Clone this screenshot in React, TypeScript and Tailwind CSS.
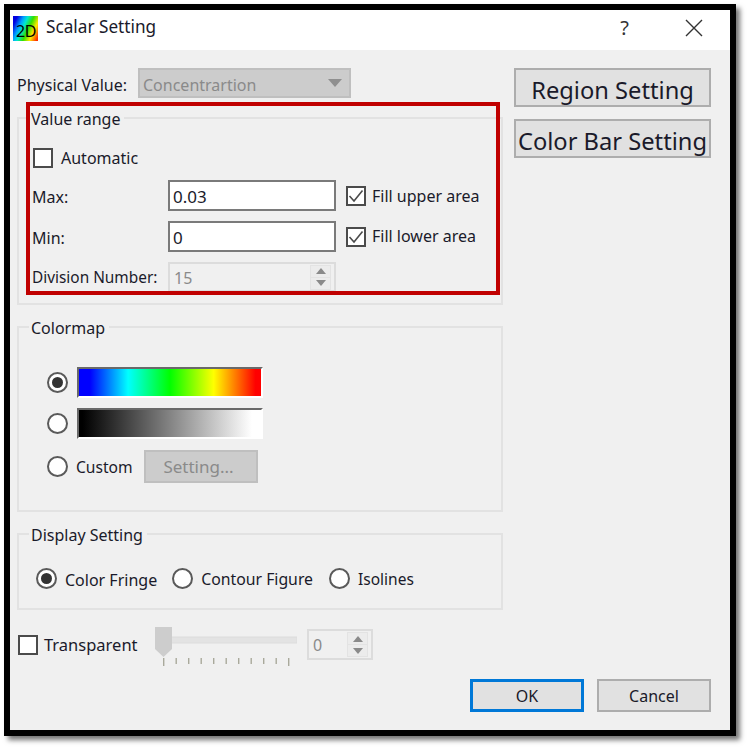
const FONT = "font-['Noto_Sans','Open_Sans',sans-serif]";

function Check({ checked = false }: { checked?: boolean }) {
  return (
    <div className="w-[20px] h-[20px] shrink-0 bg-white border-2 border-[#4b4b4b] flex items-center justify-center">
      {checked && (
        <svg width="16" height="16" viewBox="0 0 16 16" fill="none">
          <path d="M1.5 8 L6 13 L14.5 2.5" stroke="#4b4b4b" strokeWidth="1.6" />
        </svg>
      )}
    </div>
  );
}

function Radio({ on = false }: { on?: boolean }) {
  return (
    <div className="w-[21px] h-[21px] shrink-0 rounded-full bg-white border-2 border-[#5a5a5a] flex items-center justify-center">
      {on && <div className="w-[11px] h-[11px] rounded-full bg-[#333333]" />}
    </div>
  );
}

function SpinArrows() {
  return (
    <div className="w-[21px] flex flex-col gap-[1px] bg-[#e3e3e3] px-[1px] py-[1px]">
      <div className="h-[11px] bg-[#ececec] flex items-center justify-center">
        <svg width="10" height="6" viewBox="0 0 10 6"><path d="M5 0 L10 6 L0 6 Z" fill="#8a8a8a" /></svg>
      </div>
      <div className="h-[11px] bg-[#ececec] flex items-center justify-center">
        <svg width="10" height="6" viewBox="0 0 10 6"><path d="M0 0 L10 0 L5 6 Z" fill="#8a8a8a" /></svg>
      </div>
    </div>
  );
}

function Group({ title, className, children }: { title: string; className: string; children: React.ReactNode }) {
  return (
    <div className={`relative border-2 border-[#e2e2e2] ${className}`}>
      <span className="absolute left-[10px] top-[-11px] bg-[#f0f0f0] pl-[2px] pr-[4px] leading-[22px] text-[16px] text-[#1a1a2a]">
        {title}
      </span>
      {children}
    </div>
  );
}

function Slider() {
  const ticks = [163, 175.5, 188, 200.5, 213, 225.5, 238, 250.5, 263, 275.5, 288];
  return (
    <svg width="142" height="42" viewBox="155 623 142 42" className="ml-[17px] mt-[5px]">
      <rect x="170" y="634" width="127" height="6" fill="#e3e3e3" stroke="#dcdcdc" />
      <path d="M155 624 H172 V646 L163.5 654 L155 646 Z" fill="#cdcdcd" />
      {ticks.map((x, i) => (
        <rect key={x} x={x} y="655" width="1.4" height={i === 0 || i === 10 ? 8 : 6} fill="#a9a99b" />
      ))}
    </svg>
  );
}

export default function App() {
  return (
    <div className={`${FONT} w-[749px] h-[749px] bg-white p-[4px] text-[16px] text-[#1a1a2a]`}>
      <div className="w-[732px] h-[732px] border-[6px] border-black bg-[#f0f0f0] shadow-[4px_4px_5px_rgba(0,0,0,0.55)] flex flex-col">
        {/* title bar */}
        <div className="h-[40px] bg-white flex items-center pl-[3px] pr-[27px]">
          <div className="w-[25px] h-[25px] mb-[3px] pt-[5px] pl-[3px] bg-[linear-gradient(115deg,#0000e0_12%,#00a0ff_30%,#00e8d0_42%,#30e000_58%,#ffe800_76%,#ff3000_95%)]">
            <div className="text-[16px] leading-[20px] tracking-[-0.5px] text-black">2D</div>
          </div>
          <span className="ml-[8px] mb-[6px] text-[17.2px] text-[#1a1a2a]">Scalar Setting</span>
          <span className="ml-auto mb-[5px] text-[20px] text-[#333333] translate-x-[3px]">?</span>
          <svg width="18" height="18" viewBox="0 0 18 18" className="ml-[59px] mb-[5px]">
            <path d="M1 1 L17 17 M17 1 L1 17" stroke="#333333" strokeWidth="1.4" />
          </svg>
        </div>

        <div className="flex pl-[7px] pt-[18px]">
          {/* left column */}
          <div className="w-[486px] flex flex-col">
            <div className="flex items-center h-[30px]">
              <span className="w-[121px] pt-[3px]">Physical Value:</span>
              <div className="w-[213px] h-[30px] bg-[#cccccc] border-2 border-[#bfbfbf] flex items-center pl-[3px] pr-[7px] text-[#8a8a8a]">
                <span className="pt-[3px]">Concentrartion</span>
                <svg width="14" height="8" viewBox="0 0 14 8" className="ml-auto">
                  <path d="M0 0 H14 L7 8 Z" fill="#8f8f8f" />
                </svg>
              </div>
            </div>

            <Group title="Value range" className="mt-[19px] h-[188px] pl-[13px] pt-[29px]">
              <div className="flex items-center gap-[8px] h-[20px] ml-[1px]">
                <Check />
                <span>Automatic</span>
              </div>
              <div className="flex items-center h-[31px] mt-[12px]">
                <span className="w-[136px] pt-[2px]">Max:</span>
                <div className="w-[168px] h-[31px] bg-white border-2 border-[#7a7a7a] flex items-center pl-[3px] pt-[2px] text-[17px]">0.03</div>
                <div className="ml-[10px]"><Check checked /></div>
                <span className="ml-[6px]">Fill upper area</span>
              </div>
              <div className="flex items-center h-[31px] mt-[10px]">
                <span className="w-[136px] pt-[2px]">Min:</span>
                <div className="w-[168px] h-[31px] bg-white border-2 border-[#7a7a7a] flex items-center pl-[3px] pt-[2px] text-[17px]">0</div>
                <div className="ml-[10px]"><Check checked /></div>
                <span className="ml-[6px] pb-[2px]">Fill lower area</span>
              </div>
              <div className="flex items-center h-[30px] mt-[10px]">
                <span className="w-[136px] pt-[2px] text-[15.4px]">Division Number:</span>
                <div className="w-[168px] h-[30px] border-2 border-[#dcdcdc] flex items-center justify-between pl-[4px] pr-[3px] text-[#8a8a8a]">
                  <span className="pt-[1px]">15</span>
                  <SpinArrows />
                </div>
              </div>
            </Group>

            <Group title="Colormap" className="mt-[21px] h-[186px] pl-[28px] pt-[39px]">
              <div className="flex items-center gap-[9px] h-[31px]">
                <Radio on />
                <div className="w-[186px] h-[31px] border-2 border-t-[#696969] border-l-[#696969] border-r-white border-b-white bg-[linear-gradient(90deg,#0000ff_3%,#0000ff_6%,#00ffff_27%,#00ff00_50%,#ffff00_74%,#ff0000_97%)]" />
              </div>
              <div className="flex items-center gap-[9px] h-[31px] mt-[10px]">
                <Radio />
                <div className="w-[186px] h-[31px] border-2 border-t-[#696969] border-l-[#696969] border-r-white border-b-white bg-[linear-gradient(90deg,#000000_2%,#ffffff_95%)]" />
              </div>
              <div className="flex items-center h-[33px] mt-[11px]">
                <Radio />
                <span className="ml-[8px] w-[56px] pt-[2px] whitespace-nowrap text-[15.6px]">Custom</span>
                <div className="ml-[12px] w-[114px] h-[33px] bg-[#cccccc] border-2 border-[#bfbfbf] flex items-center justify-center pr-[5px] text-[17px] text-[#8a8a8a]">
                  Setting...
                </div>
              </div>
            </Group>

            <Group title="Display Setting" className="mt-[21px] h-[77px] pl-[17px] pt-[32px]">
              <div className="flex items-center h-[22px]">
                <Radio on />
                <span className="ml-[8px] pt-[3px]">Color Fringe</span>
                <div className="ml-[15px]"><Radio /></div>
                <span className="ml-[8px] pt-[3px] text-[15.8px]">Contour Figure</span>
                <div className="ml-[16px]"><Radio /></div>
                <span className="ml-[8px] pt-[3px] text-[15.5px]">Isolines</span>
              </div>
            </Group>

            <div className="flex items-center h-[31px] mt-[19px] pl-[1px]">
              <Check />
              <span className="ml-[6px] w-[94px] pt-[2px] text-[16.5px] whitespace-nowrap">Transparent</span>
              <Slider />
              <div className="ml-[10px] w-[66px] h-[31px] border-2 border-[#dcdcdc] flex items-center justify-between pl-[4px] pr-[3px] text-[#8a8a8a]">
                <span>0</span>
                <SpinArrows />
              </div>
            </div>
          </div>

          {/* right column */}
          <div className="ml-[11px] w-[197px] flex flex-col gap-[12px] text-[23.7px] leading-none">
            <div className="h-[39px] bg-[#e1e1e1] border-2 border-[#adadad] flex items-center justify-center pt-[6px]">Region Setting</div>
            <div className="h-[39px] bg-[#e1e1e1] border-2 border-[#adadad] flex items-center justify-center pt-[6px] whitespace-nowrap">Color Bar Setting</div>
          </div>
        </div>

        <div className="flex justify-end gap-[13px] pr-[19px] mt-[19px]">
          <div className="w-[114px] h-[33px] bg-[#e1e1e1] border-[3px] border-[#0078d7] flex items-center justify-center">OK</div>
          <div className="w-[114px] h-[33px] bg-[#e1e1e1] border-2 border-[#adadad] flex items-center justify-center">Cancel</div>
        </div>
      </div>

      {/* red highlight drawn over the Value range group */}
      <div className="absolute left-[26px] top-[102px] w-[474px] h-[193px] border-[4px] border-[#c00000] pointer-events-none" />
    </div>
  );
}
